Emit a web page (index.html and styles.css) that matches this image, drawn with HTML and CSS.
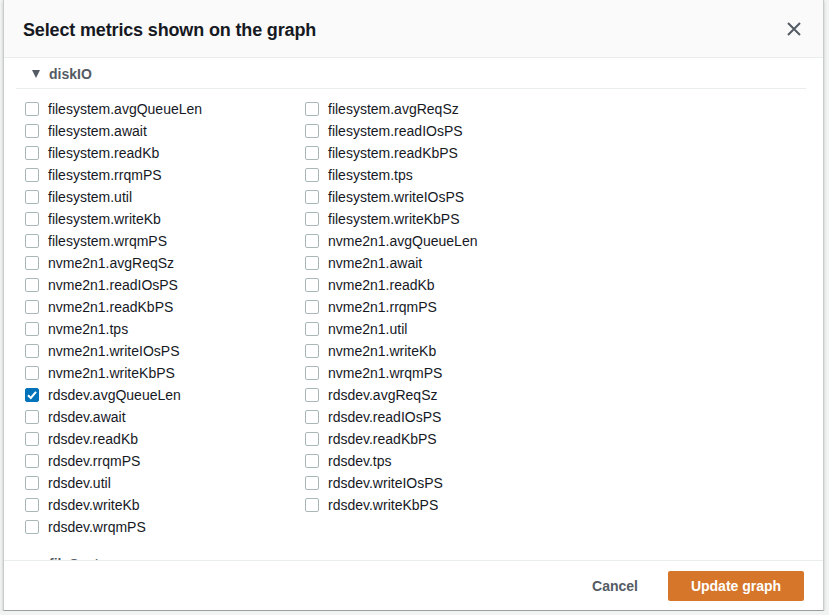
FILE: index.html
```html
<!DOCTYPE html>
<html>
<head>
<meta charset="utf-8">
<link rel="stylesheet" href="styles.css">
</head>
<body>
<div class="modal">
  <div class="header">
    <h2 class="title">Select metrics shown on the graph</h2>
    <button class="close" aria-label="Close">
      <svg width="16" height="16" viewBox="0 0 16 16"><path d="M2 2 L14 14 M14 2 L2 14" stroke="#545b64" stroke-width="2" fill="none"/></svg>
    </button>
  </div>
  <div class="body">
    <div class="section-head"><span class="caret"></span><span class="section-name">diskIO</span></div>
    <div class="cols">
      <div class="col">
        <label class="row"><span class="box"></span>filesystem.avgQueueLen</label>
        <label class="row"><span class="box"></span>filesystem.await</label>
        <label class="row"><span class="box"></span>filesystem.readKb</label>
        <label class="row"><span class="box"></span>filesystem.rrqmPS</label>
        <label class="row"><span class="box"></span>filesystem.util</label>
        <label class="row"><span class="box"></span>filesystem.writeKb</label>
        <label class="row"><span class="box"></span>filesystem.wrqmPS</label>
        <label class="row"><span class="box"></span>nvme2n1.avgReqSz</label>
        <label class="row"><span class="box"></span>nvme2n1.readIOsPS</label>
        <label class="row"><span class="box"></span>nvme2n1.readKbPS</label>
        <label class="row"><span class="box"></span>nvme2n1.tps</label>
        <label class="row"><span class="box"></span>nvme2n1.writeIOsPS</label>
        <label class="row"><span class="box"></span>nvme2n1.writeKbPS</label>
        <label class="row"><span class="box checked"><svg width="14" height="14" viewBox="0 0 14 14"><path d="M3 7.2 L5.8 10 L11 3.8" stroke="#fff" stroke-width="2" fill="none"/></svg></span>rdsdev.avgQueueLen</label>
        <label class="row"><span class="box"></span>rdsdev.await</label>
        <label class="row"><span class="box"></span>rdsdev.readKb</label>
        <label class="row"><span class="box"></span>rdsdev.rrqmPS</label>
        <label class="row"><span class="box"></span>rdsdev.util</label>
        <label class="row"><span class="box"></span>rdsdev.writeKb</label>
        <label class="row"><span class="box"></span>rdsdev.wrqmPS</label>
      </div>
      <div class="col">
        <label class="row"><span class="box"></span>filesystem.avgReqSz</label>
        <label class="row"><span class="box"></span>filesystem.readIOsPS</label>
        <label class="row"><span class="box"></span>filesystem.readKbPS</label>
        <label class="row"><span class="box"></span>filesystem.tps</label>
        <label class="row"><span class="box"></span>filesystem.writeIOsPS</label>
        <label class="row"><span class="box"></span>filesystem.writeKbPS</label>
        <label class="row"><span class="box"></span>nvme2n1.avgQueueLen</label>
        <label class="row"><span class="box"></span>nvme2n1.await</label>
        <label class="row"><span class="box"></span>nvme2n1.readKb</label>
        <label class="row"><span class="box"></span>nvme2n1.rrqmPS</label>
        <label class="row"><span class="box"></span>nvme2n1.util</label>
        <label class="row"><span class="box"></span>nvme2n1.writeKb</label>
        <label class="row"><span class="box"></span>nvme2n1.wrqmPS</label>
        <label class="row"><span class="box"></span>rdsdev.avgReqSz</label>
        <label class="row"><span class="box"></span>rdsdev.readIOsPS</label>
        <label class="row"><span class="box"></span>rdsdev.readKbPS</label>
        <label class="row"><span class="box"></span>rdsdev.tps</label>
        <label class="row"><span class="box"></span>rdsdev.writeIOsPS</label>
        <label class="row"><span class="box"></span>rdsdev.writeKbPS</label>
      </div>
    </div>
    <div class="section-head next"><span class="caret"></span><span class="section-name">fileSystem</span></div>
  </div>
  <div class="footer">
    <button class="cancel">Cancel</button>
    <button class="primary">Update graph</button>
  </div>
</div>
</body>
</html>
```

FILE: styles.css
```css
html, body {
  margin: 0;
  padding: 0;
  background: #f2f3f3;
  font-family: "Liberation Sans", Arial, sans-serif;
  color: #16191f;
}
.modal {
  margin-left: 3px;
  width: 819px;
  height: 610px;
  background: #fff;
  border-left: 1px solid #c9cccc;
  border-right: 1px solid #c9cccc;
  border-bottom: 1px solid #9aa0a0;
  box-shadow: 0 1px 3px rgba(0,0,0,0.2);
  display: flex;
  flex-direction: column;
  overflow: hidden;
}
.header {
  height: 58px;
  flex: none;
  box-sizing: border-box;
  background: #fafafa;
  border-bottom: 1px solid #eaeded;
  display: flex;
  align-items: center;
  justify-content: space-between;
  padding: 3px 21px 0 19px;
}
.title {
  margin: 0;
  font-size: 18px;
  font-weight: bold;
  letter-spacing: -0.15px;
}
.close {
  border: 0;
  background: none;
  padding: 0;
  width: 16px;
  height: 16px;
  display: flex;
  margin-top: -2px;
}
.body {
  flex: 1;
  overflow: hidden;
  padding: 0 17px 0 12px;
}
.section-head {
  height: 31px;
  box-sizing: border-box;
  border-bottom: 1px solid #eaeded;
  display: flex;
  align-items: center;
  padding: 2px 0 0 16px;
}
.section-head.next {
  padding-top: 1px;
}
.caret {
  width: 0;
  height: 0;
  border-left: 4.5px solid transparent;
  border-right: 4.5px solid transparent;
  border-top: 8px solid #545b64;
  margin-right: 9px;
}
.section-name {
  font-size: 14px;
  font-weight: bold;
  color: #545b64;
}
.cols {
  display: flex;
  padding: 9px 0 10px 9px;
}
.col {
  width: 280px;
  display: flex;
  flex-direction: column;
}
.row {
  height: 22px;
  display: flex;
  align-items: center;
  font-size: 14px;
  color: #16191f;
}
.box {
  width: 14px;
  height: 14px;
  box-sizing: border-box;
  border: 1px solid #aab7b8;
  border-radius: 2px;
  margin-right: 9px;
  display: flex;
  background: #fff;
}
.box.checked {
  background: #0073bb;
  border-color: #0073bb;
}
.box.checked svg {
  margin: -1px;
}
.footer {
  height: 50px;
  flex: none;
  box-sizing: border-box;
  border-top: 1px solid #eaeded;
  display: flex;
  align-items: center;
  justify-content: flex-end;
  padding: 0 19px 0 0;
  gap: 8px;
  background: #fff;
}
button {
  font-family: "Liberation Sans", Arial, sans-serif;
  cursor: pointer;
}
.cancel {
  border: 0;
  background: none;
  font-size: 14px;
  font-weight: bold;
  color: #545b64;
  padding: 0 22px;
  height: 30px;
}
.primary {
  border: 0;
  border-radius: 2px;
  background: #d5762a;
  color: #fff;
  font-size: 14px;
  font-weight: bold;
  width: 136px;
  height: 30px;
}
```
